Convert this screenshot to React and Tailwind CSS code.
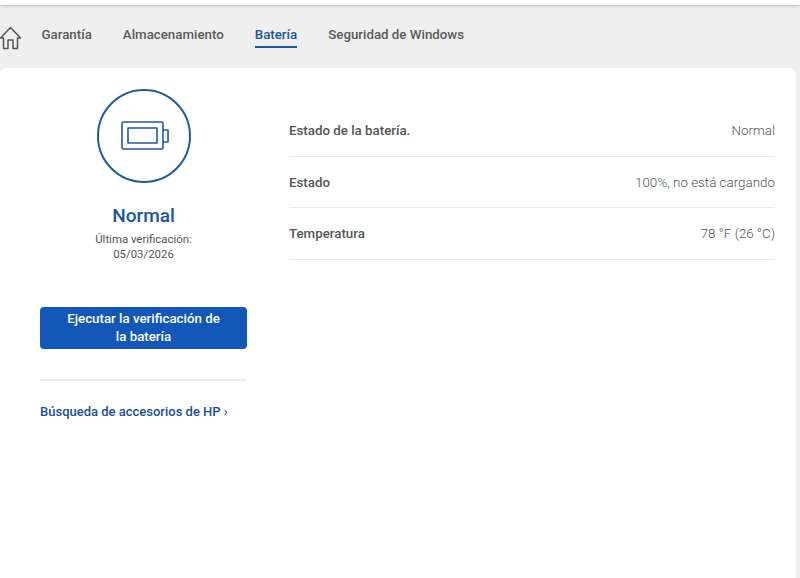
const tabs = [
  { label: 'Garantía', active: false },
  { label: 'Almacenamiento', active: false },
  { label: 'Batería', active: true },
  { label: 'Seguridad de Windows', active: false },
]

const rows = [
  ['Estado de la batería.', 'Normal'],
  ['Estado', '100%, no está cargando'],
  ['Temperatura', '78 °F (26 °C)'],
]

export default function App() {
  return (
    <div className="w-[800px] h-[578px] overflow-hidden bg-[#efefef] font-['Roboto',sans-serif] flex flex-col">
      {/* Top strip */}
      <div className="h-[5px] shrink-0 bg-white shadow-[0_1px_3px_rgba(0,0,0,0.2)]" />

      {/* Tabs */}
      <div className="h-[63px] shrink-0 flex items-center">
        <svg width="22" height="24" viewBox="0 0 22 24" fill="none" stroke="#555" strokeWidth="1.5" strokeLinejoin="round" className="shrink-0 mt-[3px]">
          <path d="M0.5 12 L10.5 1.5 L20.5 12 H17.5 V22.5 H13 V14 H8 V22.5 H3.5 V12 Z" />
        </svg>
        <div className="flex gap-[31px] ml-[19.5px]">
          {tabs.map(tab => (
            <div
              key={tab.label}
              className={`text-[13.3px] leading-[20px] pb-[1px] border-b-2 font-medium ${tab.active ? 'text-[#1a56a0] border-[#1a56a0]' : 'text-[#5a5a5a] border-transparent'}`}
            >
              {tab.label}
            </div>
          ))}
        </div>
      </div>

      {/* Card */}
      <div className="flex-1 mr-[4px] bg-white rounded-t-[6px] flex">
        {/* Left column */}
        <div className="w-[207px] ml-[40px] shrink-0 flex flex-col items-center pt-[21px]">
          <div className="w-[94px] h-[94px] rounded-full border-2 border-[#1f5aa3] flex items-center justify-center">
            <svg width="48" height="30" viewBox="0 0 48 30" fill="none" stroke="#1f5aa3" strokeWidth="1.6" strokeLinejoin="round" className="ml-[2px]">
              <rect x="1" y="1" width="41" height="27" rx="1.5" />
              <rect x="7" y="7" width="29" height="15" />
              <path d="M42 9 H47 V21 H42" />
            </svg>
          </div>
          <div className="mt-[20px] text-[19px] leading-[26px] font-medium text-[#1a56a0]">Normal</div>
          <div className="mt-[3px] text-[11.4px] leading-[15px] text-[#555] text-center">
            Última verificación:
            <br />
            05/03/2026
          </div>
          <button className="mt-[45px] w-full h-[42px] rounded-[4px] bg-[#1358b8] text-white text-[13.3px] leading-[18px] font-medium px-[27px]">
            Ejecutar la verificación de la batería
          </button>
          <div className="mt-[30px] w-full h-[2px] bg-[#ececec]" />
          <a className="mt-[21px] self-start text-[13px] leading-[20px] font-medium text-[#1a4f96]">Búsqueda de accesorios de HP ›</a>
        </div>

        {/* Right column */}
        <div className="ml-[42px] w-[486px] pt-[37px]">
          {rows.map(([label, value]) => (
            <div key={label} className="h-[51.5px] pt-[2px] flex items-center justify-between border-b border-[#e9e9e9]">
              <span className="text-[13.3px] font-medium text-[#555]">{label}</span>
              <span className="text-[13.4px] font-light text-[#555]">{value}</span>
            </div>
          ))}
        </div>
      </div>
    </div>
  )
}
